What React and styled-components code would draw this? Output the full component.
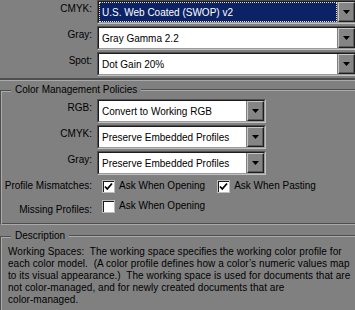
import React from 'react';
import styled, { createGlobalStyle } from 'styled-components';

const DARK = '#4e4e4e';
const LIGHT = '#aaaaaa';

const Global = createGlobalStyle`
  html, body { margin: 0; padding: 0; background: #808080; overflow: hidden; }
  body { font-family: "Liberation Sans", Arial, sans-serif; font-size: 10px; color: #000; }
`;

const Page = styled.div`
  width: 355px;
  height: 310px;
  overflow: hidden;
  background: #808080;
`;

const FormGrid = styled.div`
  display: grid;
  grid-template-columns: ${(p) => p.$labelW}px auto;
  column-gap: 5px;
  row-gap: 2px;
  align-items: start;
`;

const Label = styled.div`
  text-align: right;
  line-height: 12px;
  padding-top: ${(p) => p.$top ?? 3}px;
  white-space: nowrap;
`;

const Combo = styled.div`
  display: flex;
  width: ${(p) => p.$w}px;
  height: 24px;
  box-sizing: border-box;
  border: 1px solid;
  border-color: #505050 #c2c2c2 #c2c2c2 #505050;
`;

const ComboInner = styled.div`
  flex: 1;
  display: flex;
  gap: 1px;
  border: 1px solid;
  border-color: #1c1c1c #9a9a9a #9a9a9a #1c1c1c;
  min-width: 0;
`;

const Field = styled.div`
  flex: 1;
  min-width: 0;
  background: ${(p) => (p.$selected ? '#0b2266' : '#fff')};
  color: ${(p) => (p.$selected ? '#fff' : '#000')};
  outline: ${(p) => (p.$selected ? '1px dotted #f3e6a8' : 'none')};
  outline-offset: -1px;
  line-height: 20px;
  padding-left: 3px;
  padding-top: 1px;
  box-sizing: border-box;
  white-space: nowrap;
  overflow: hidden;
`;

const DropButton = styled.div`
  width: 17px;
  flex: none;
  box-sizing: border-box;
  background: #858585;
  border: 1px solid;
  border-color: #c6c6c6 #1e1e1e #1e1e1e #c6c6c6;
  box-shadow: inset -1px -1px 0 #5c5c5c;
  display: flex;
  align-items: center;
  justify-content: center;
`;

const Separator = styled.div`
  margin-top: 2px;
  height: 2px;
  background: ${DARK};
  border-bottom: 1px solid ${LIGHT};
`;

const Group = styled.section`
  margin-top: ${(p) => p.$mt}px;
`;

const Legend = styled.div`
  display: flex;
  height: 12px;
`;

const LegendCorner = styled.div`
  width: 11px;
  height: 6px;
  align-self: flex-end;
  box-sizing: border-box;
  border-top: 1px solid ${DARK};
  border-left: 1px solid ${DARK};
  box-shadow: inset 1px 1px 0 ${LIGHT};
`;

const LegendTitle = styled.div`
  padding: 0 4px;
  line-height: 12px;
  white-space: nowrap;
`;

const LegendLine = styled.div`
  flex: 1;
  height: 6px;
  align-self: flex-end;
  border-top: 1px solid ${DARK};
  box-shadow: inset 0 1px 0 ${LIGHT};
`;

const GroupBody = styled.div`
  border-left: 1px solid ${DARK};
  border-bottom: 1px solid ${LIGHT};
  box-shadow: inset 1px 0 0 ${LIGHT}, inset 0 -1px 0 ${DARK};
  padding: ${(p) => p.$pad};
`;

const CheckRow = styled.div`
  display: flex;
  align-items: center;
  height: 18px;
  gap: 12px;
  margin-left: 5px;
`;

const CheckItem = styled.label`
  display: flex;
  align-items: center;
  gap: 4px;
  white-space: nowrap;
  line-height: 12px;
`;

const Box = styled.span`
  width: 13px;
  height: 13px;
  box-sizing: border-box;
  border: 1px solid #bdbdbd;
  background: #fff;
  box-shadow: inset 1px 1px 0 #1a1a1a;
  display: flex;
  align-items: center;
  justify-content: center;
`;

const DescText = styled.div`
  white-space: pre;
  line-height: 12px;
  letter-spacing: 0.06px;
`;

const Arrow = () => (
  <svg width="7" height="4" viewBox="0 0 7 4">
    <polygon points="0,0 7,0 3.5,4" fill="#000" />
  </svg>
);

const Select = ({ w, value, selected }) => (
  <Combo $w={w}>
    <ComboInner>
      <Field $selected={selected}>{value}</Field>
      <DropButton>
        <Arrow />
      </DropButton>
    </ComboInner>
  </Combo>
);

const Check = ({ checked, children }) => (
  <CheckItem>
    <Box>
      {checked && (
        <svg width="9" height="9" viewBox="0 0 9 9">
          <path d="M1 4.5 L3.3 7 L8 1.5" stroke="#000" strokeWidth="1.8" fill="none" />
        </svg>
      )}
    </Box>
    {children}
  </CheckItem>
);

const GroupBox = ({ title, mt, pad, children }) => (
  <Group $mt={mt}>
    <Legend>
      <LegendCorner />
      <LegendTitle>{title}</LegendTitle>
      <LegendLine />
    </Legend>
    <GroupBody $pad={pad}>{children}</GroupBody>
  </Group>
);

const description = [
  'Working Spaces:  The working space specifies the working color profile for',
  'each color model.  (A color profile defines how a color\u2019s numeric values map',
  'to its visual appearance.)  The working space is used for documents that are',
  'not color-managed, and for newly created documents that are',
  'color-managed.',
].join('\n');

export default function App() {
  return (
    <Page>
      <Global />
      <FormGrid $labelW={92}>
        <Label>CMYK:</Label>
        <Select w={260} value="U.S. Web Coated (SWOP) v2" selected />
        <Label>Gray:</Label>
        <Select w={260} value="Gray Gamma 2.2" />
        <Label>Spot:</Label>
        <Select w={260} value="Dot Gain 20%" />
      </FormGrid>
      <Separator />
      <GroupBox title="Color Management Policies" mt={3} pad="3px 0 8px 0">
        <FormGrid $labelW={91}>
          <Label>RGB:</Label>
          <Select w={169} value="Convert to Working RGB" />
          <Label>CMYK:</Label>
          <Select w={169} value="Preserve Embedded Profiles" />
          <Label>Gray:</Label>
          <Select w={169} value="Preserve Embedded Profiles" />
          <Label>Profile Mismatches:</Label>
          <CheckRow>
            <Check checked>Ask When Opening</Check>
            <Check checked>Ask When Pasting</Check>
          </CheckRow>
          <Label $top={7}>Missing Profiles:</Label>
          <CheckRow>
            <Check>Ask When Opening</Check>
          </CheckRow>
        </FormGrid>
      </GroupBox>
      <GroupBox title="Description" mt={5} pad="4px 0 20px 7px">
        <DescText>{description}</DescText>
      </GroupBox>
    </Page>
  );
}
